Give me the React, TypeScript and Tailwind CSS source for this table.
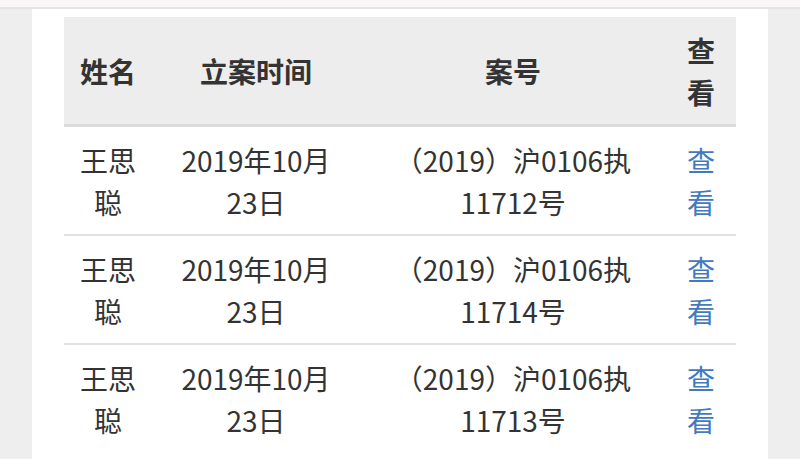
import React from "react";

const rows = [
  { name: ["王思", "聪"], date: ["2019年10月", "23日"], no: ["（2019）沪0106执", "11712号"] },
  { name: ["王思", "聪"], date: ["2019年10月", "23日"], no: ["（2019）沪0106执", "11714号"] },
  { name: ["王思", "聪"], date: ["2019年10月", "23日"], no: ["（2019）沪0106执", "11713号"] },
];

function Lines({ lines }: { lines: string[] }) {
  return (
    <>
      {lines.map((l, i) => (
        <React.Fragment key={i}>
          {i > 0 && <br />}
          {l}
        </React.Fragment>
      ))}
    </>
  );
}

export default function App() {
  return (
    <div
      className="w-[800px] h-[459px] bg-[#eeeeee] flex flex-col overflow-hidden text-[#333333]"
      style={{ fontFamily: '"Noto Sans CJK SC", "Noto Sans", sans-serif' }}
    >
      <div className="h-[9px] bg-[#f8f6f6] border-b-2 border-[#e4e4e4] shrink-0" />
      <div className="flex flex-1">
        <div className="w-[32px] shrink-0" />
        <div className="w-[736px] bg-white px-8 pt-2">
          <div className="grid grid-cols-[88px_208px_306px_70px] text-[28px] leading-[42px] text-center">
            <div className="col-span-4 grid grid-cols-subgrid bg-[#ededed] border-b-[3px] border-[#dcdcdc] font-bold">
              <div className="py-[11.5px] flex items-center justify-center">姓名</div>
              <div className="py-[11.5px] flex items-center justify-center">立案时间</div>
              <div className="py-[11.5px] flex items-center justify-center">案号</div>
              <div className="py-[11.5px] flex items-center justify-center">
                <Lines lines={["查", "看"]} />
              </div>
            </div>
            {rows.map((r, i) => (
              <div
                key={i}
                className={
                  "col-span-4 grid grid-cols-subgrid " +
                  (i < rows.length - 1 ? "border-b-2 border-[#e2e2e2]" : "")
                }
              >
                <div className="py-[11.5px]">
                  <Lines lines={r.name} />
                </div>
                <div className="py-[11.5px]">
                  <Lines lines={r.date} />
                </div>
                <div className="py-[11.5px]">
                  <Lines lines={r.no} />
                </div>
                <div className="py-[11.5px] text-[#4279bf]">
                  <Lines lines={["查", "看"]} />
                </div>
              </div>
            ))}
          </div>
        </div>
        <div className="flex-1" />
      </div>
    </div>
  );
}
